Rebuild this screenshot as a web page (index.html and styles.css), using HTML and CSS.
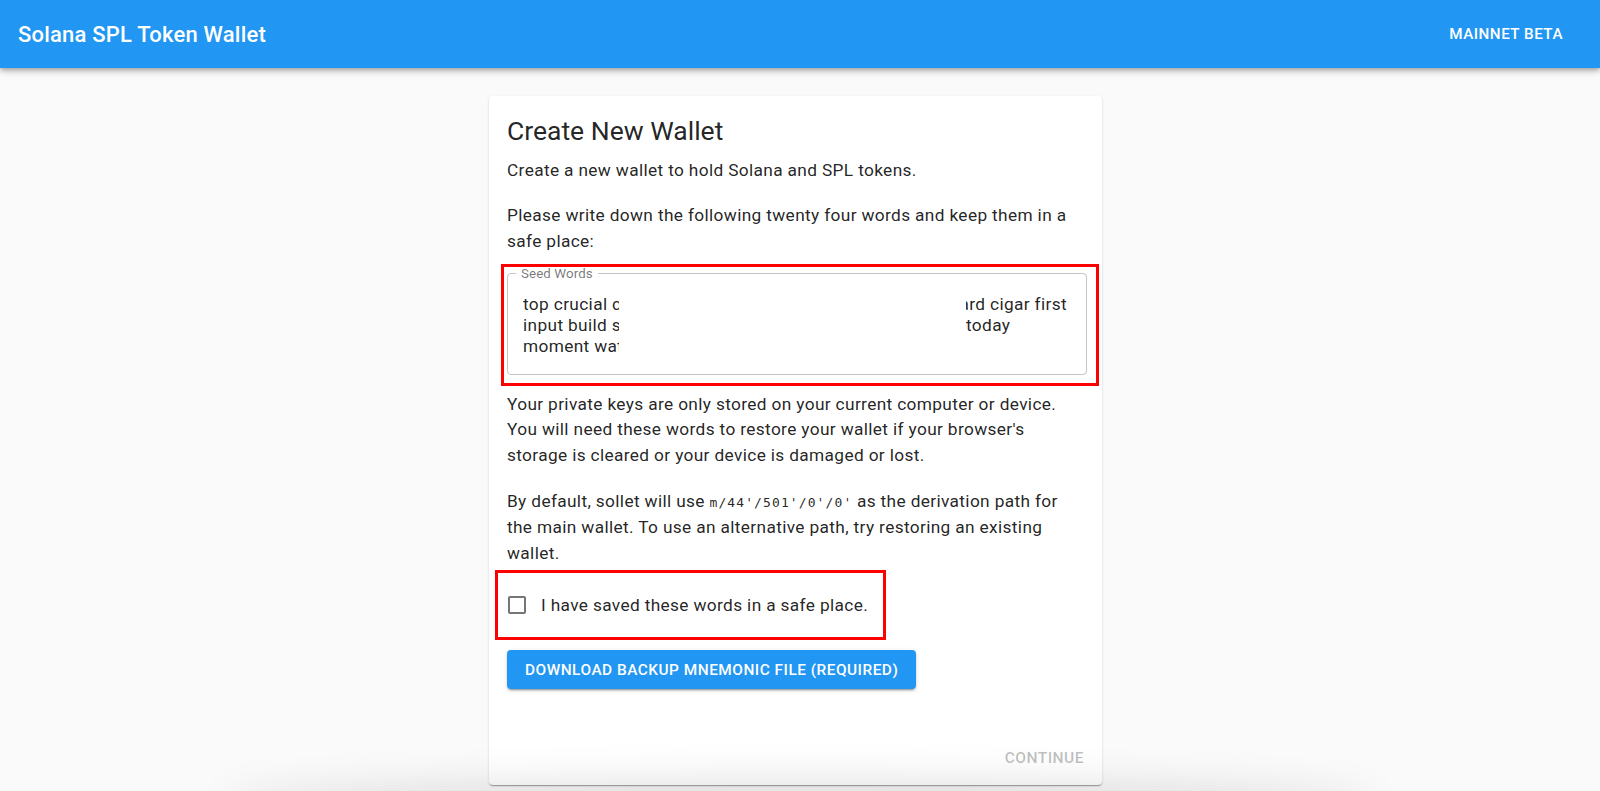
FILE: index.html
```html
<!DOCTYPE html>
<html lang="en">
<head>
<meta charset="utf-8">
<title>Solana SPL Token Wallet</title>
<link rel="stylesheet" href="styles.css">
</head>
<body>
<header class="appbar">
  <div class="brand">Solana SPL Token Wallet</div>
  <button class="net-btn" type="button">Mainnet Beta</button>
</header>
<main class="main">
  <section class="card">
    <div class="card-content">
      <h2 class="card-title">Create New Wallet</h2>
      <p class="para">Create a new wallet to hold Solana and SPL tokens.</p>
      <p class="para">Please write down the following twenty four words and keep them in a safe place:</p>
      <div class="annot annot-seed">
        <fieldset class="seed-field">
          <legend class="seed-legend">Seed Words</legend>
          <div class="seed-lines">
            <div class="seed-line"><span class="frag-left">top crucial coin</span><span class="frag-right">hard cigar first</span></div>
            <div class="seed-line"><span class="frag-left">input build scene</span><span class="frag-right">today</span></div>
            <div class="seed-line"><span class="frag-left">moment water</span><span class="frag-right"></span></div>
          </div>
        </fieldset>
      </div>
      <p class="para para-tight">Your private keys are only stored on your current computer or device. You will need these words to restore your wallet if your browser's storage is cleared or your device is damaged or lost.</p>
      <p class="para para-last">By default, sollet will use <code class="mono">m/44'/501'/0'/0'</code> as the derivation path for the main wallet. To use an alternative path, try restoring an existing wallet.</p>
      <div class="annot annot-check">
        <label class="check-row">
          <span class="check-wrap"><span class="check-box"></span></span>
          <span class="check-label">I have saved these words in a safe place.</span>
        </label>
      </div>
      <button class="btn-primary" type="button">Download Backup Mnemonic File (Required)</button>
    </div>
    <div class="card-actions">
      <button class="btn-text" type="button" disabled>Continue</button>
    </div>
  </section>
</main>
<div class="bottom-shade"></div>
</body>
</html>
```
FILE: styles.css
```css
* { box-sizing: border-box; }
html, body { margin: 0; padding: 0; }
body {
  background: #fafafa;
  font-family: Roboto, "Liberation Sans", Arial, sans-serif;
  color: rgba(0,0,0,0.87);
  height: 791px;
  overflow: hidden;
}
.appbar {
  height: 68px;
  background: #2196f3;
  color: #fff;
  display: flex;
  align-items: center;
  justify-content: space-between;
  padding: 0 29px 0 18px;
  box-shadow: 0 2px 4px -1px rgba(0,0,0,0.2), 0 4px 5px 0 rgba(0,0,0,0.14), 0 1px 10px 0 rgba(0,0,0,0.12);
  position: relative;
  z-index: 2;
}
.brand {
  font-size: 22px;
  font-weight: 500;
  letter-spacing: 0.2px;
}
.net-btn {
  background: none;
  border: 0;
  color: #fff;
  font-family: inherit;
  font-size: 15.2px;
  font-weight: 500;
  letter-spacing: 0.5px;
  text-transform: uppercase;
  padding: 6px 8px;
}
.main {
  display: flex;
  justify-content: center;
  padding: 28px 9px 0 0;
}
.card {
  width: 613px;
  height: 689px;
  background: #fff;
  border-radius: 4px;
  box-shadow: 0 2px 1px -1px rgba(0,0,0,0.2), 0 1px 1px 0 rgba(0,0,0,0.14), 0 1px 3px 0 rgba(0,0,0,0.12);
  display: flex;
  flex-direction: column;
  justify-content: space-between;
}
.card-content {
  padding: 18px 18px 0 18px;
}
.card-title {
  margin: 0 0 11px 0;
  font-size: 26.5px;
  font-weight: 400;
  line-height: 33px;
}
.para {
  margin: 0 0 19.5px 0;
  font-size: 17.3px;
  line-height: 25.5px;
  letter-spacing: 0.35px;
}
.para-tight { margin-bottom: 20.5px; }
.para-last { margin-bottom: 7px; }
.mono {
  font-family: "DejaVu Sans Mono", "Liberation Mono", monospace;
  font-size: 13px;
  letter-spacing: 1.1px;
}
.annot {
  outline: 3px solid #ff0000;
}
.annot-seed {
  margin: -7px -12px 0 -3px;
  padding: 0 9px 8px 3px;
  margin-bottom: 9px;
}
.seed-field {
  margin: 0;
  border: 1px solid #c4c4c4;
  border-radius: 4px;
  padding: 13px 16px 17px 15px;
  min-width: 0;
}
.seed-legend {
  font-size: 13.3px;
  line-height: 14px;
  color: rgba(0,0,0,0.54);
  padding: 0 5px;
  margin-left: -7px;
  letter-spacing: 0.1px;
}
.seed-lines {
  font-size: 17.3px;
  line-height: 21px;
  letter-spacing: 0.35px;
}
.seed-line {
  display: flex;
  justify-content: space-between;
  height: 21px;
}
.frag-left {
  width: 96px;
  overflow: hidden;
  white-space: nowrap;
}
.frag-right {
  width: 101px;
  overflow: hidden;
  white-space: nowrap;
  direction: rtl;
  text-align: left;
  margin-right: 3px;
}
.annot-check {
  width: 385px;
  height: 64px;
  margin: 0 0 13px -9px;
  display: flex;
  align-items: center;
}
.check-row {
  display: flex;
  align-items: center;
  margin-left: -2px;
}
.check-wrap {
  width: 42px;
  height: 42px;
  padding: 9px;
  display: flex;
  align-items: center;
  justify-content: center;
}
.check-box {
  width: 18px;
  height: 18px;
  border: 2px solid #757575;
  border-radius: 2px;
}
.check-label {
  font-size: 17.3px;
  line-height: 25px;
  letter-spacing: 0.35px;
  margin-left: 3px;
}
.btn-primary {
  display: block;
  background: #2196f3;
  color: #fff;
  border: 0;
  border-radius: 4px;
  height: 39px;
  padding: 0 18px;
  font-family: inherit;
  font-size: 15.4px;
  font-weight: 500;
  letter-spacing: 0.5px;
  text-transform: uppercase;
  box-shadow: 0 3px 1px -2px rgba(0,0,0,0.2), 0 2px 2px 0 rgba(0,0,0,0.14), 0 1px 5px 0 rgba(0,0,0,0.12);
}
.card-actions {
  display: flex;
  justify-content: flex-end;
  padding: 8px 10px 12px 8px;
}
.btn-text {
  background: none;
  border: 0;
  font-family: inherit;
  font-size: 15.5px;
  font-weight: 500;
  letter-spacing: 0.5px;
  text-transform: uppercase;
  color: rgba(0,0,0,0.26);
  padding: 6px 8px;
}
.bottom-shade {
  position: fixed;
  left: 230px;
  right: 230px;
  bottom: -30px;
  height: 30px;
  border-radius: 50%;
  box-shadow: 0 0 40px 10px rgba(0,0,0,0.12);
  z-index: 3;
}
```
